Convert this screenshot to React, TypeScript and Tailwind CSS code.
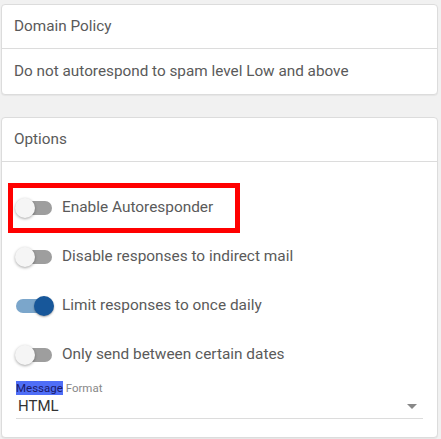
import React from "react";

function Toggle({ on }: { on?: boolean }) {
  return (
    <div className="relative w-[38px] h-[20px] flex items-center shrink-0">
      <div
        className={
          on
            ? "w-[36px] h-[14px] rounded-full bg-[#7ba6cb] ml-[1px]"
            : "w-[36px] h-[14px] rounded-full bg-[#9e9e9e] ml-[1px]"
        }
      />
      <div
        className={
          on
            ? "absolute right-[-1px] top-0 w-[20px] h-[20px] rounded-full bg-[#17579a] shadow-[0_1px_2px_rgba(0,0,0,0.35)]"
            : "absolute left-0 top-0 w-[20px] h-[20px] rounded-full bg-[#f5f5f5] shadow-[0_1px_3px_rgba(0,0,0,0.35)]"
        }
      />
    </div>
  );
}

function Row({ label, on }: { label: string; on?: boolean }) {
  return (
    <div className="h-[49px] flex items-center pl-[13px] gap-[9px]">
      <Toggle on={on} />
      <span className="text-[15.4px] text-[#5a5a5a]">{label}</span>
    </div>
  );
}

export default function App() {
  return (
    <div
      className="w-[441px] h-[439px] bg-[#f1f1f1] pt-[4px] pl-[1px] overflow-hidden"
      style={{ fontFamily: "Roboto, 'Noto Sans', sans-serif" }}
    >
      <div className="w-[437px] bg-white border border-[#dcdcdc] rounded-[4px] shadow-[0_1px_1px_rgba(0,0,0,0.05)]">
        <div className="h-[44px] flex items-center px-[12px] border-b border-[#dcdcdc] text-[15.3px] text-[#5a5a5a]">
          Domain Policy
        </div>
        <div className="h-[45px] flex items-center px-[12px] text-[15.3px] text-[#5a5a5a]">
          Do not autorespond to spam level Low and above
        </div>
      </div>
      <div className="mt-[22px] w-[437px] h-[321px] bg-white border border-[#dcdcdc] rounded-[4px] shadow-[0_1px_1px_rgba(0,0,0,0.05)]">
        <div className="h-[44px] flex items-center px-[12px] border-b border-[#dcdcdc] text-[15.3px] text-[#5a5a5a]">
          Options
        </div>
        <div className="pt-[21px] relative">
          <div className="absolute left-[6px] top-[21px] w-[232px] h-[50px] border-[5px] border-[#ff0000]" />
          <Row label="Enable Autoresponder" />
          <Row label="Disable responses to indirect mail" />
          <Row label="Limit responses to once daily" on />
          <Row label="Only send between certain dates" />
          <div className="mx-[14px] mt-[3px]">
            <div className="text-[11.5px] leading-[13px] text-[#888]">
              <span className="bg-[#4f6ef7] text-[#1a1a6a]">Message</span> Format
            </div>
            <div className="flex items-center justify-between h-[24px] border-b border-[#dcdcdc] pl-[2px] pr-[6px]">
              <span className="text-[15px] text-[#333]">HTML</span>
              <svg width="10" height="5" viewBox="0 0 10 5">
                <path d="M0 0 L10 0 L5 5 Z" fill="#888" />
              </svg>
            </div>
          </div>
        </div>
      </div>
    </div>
  );
}
